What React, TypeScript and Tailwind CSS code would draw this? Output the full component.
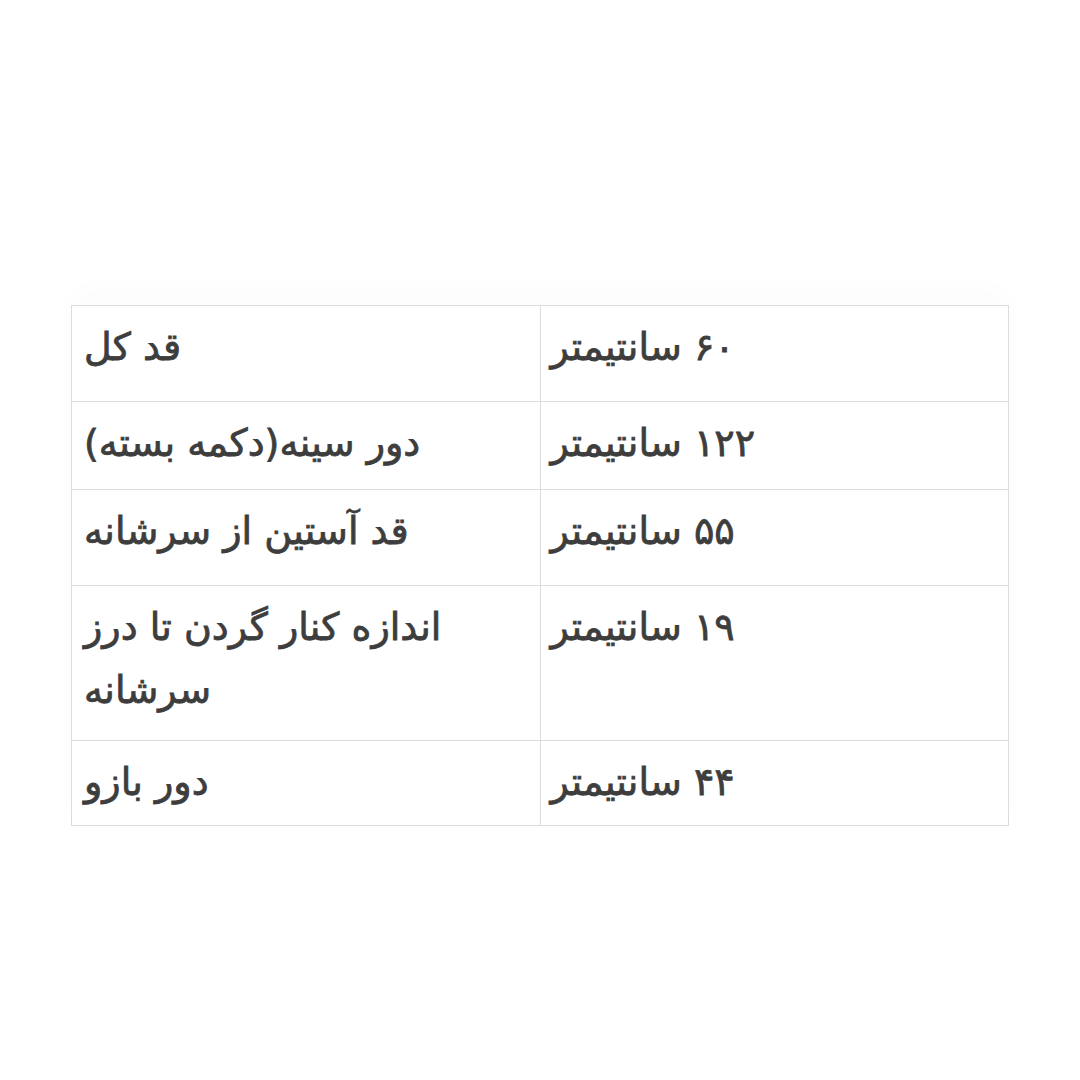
import React from "react";

const rows: { label: string; value: string; h: string }[] = [
  { label: "قد کل", value: "۶۰ سانتیمتر", h: "h-[96px]" },
  { label: "دور سینه(دکمه بسته)", value: "۱۲۲ سانتیمتر", h: "h-[88px]" },
  { label: "قد آستین از سرشانه", value: "۵۵ سانتیمتر", h: "h-[96px]" },
  { label: "اندازه کنار گردن تا درز سرشانه", value: "۱۹ سانتیمتر", h: "h-[155px]" },
  { label: "دور بازو", value: "۴۴ سانتیمتر", h: "h-[85px]" },
];

export default function App() {
  return (
    <div className="w-[1080px] h-[1080px] bg-white flex flex-col items-center pt-[305px]">
      <div className="w-[938px] shadow-[0_-14px_24px_rgba(0,0,0,0.015)]">
        <table className="w-full border-collapse table-fixed" dir="ltr">
          <tbody>
            {rows.map((r, i) => (
              <tr key={i} className={r.h}>
                <td
                  dir="rtl"
                  className="w-1/2 border border-[#dcdcdc] text-left align-top pl-[12px] pr-[60px] pt-[10px] text-[38px] leading-[63px] text-[#3d3d3d] [-webkit-text-stroke:0.8px_#3d3d3d] font-['DejaVu_Sans',sans-serif]"
                >
                  {r.label}
                </td>
                <td
                  dir="rtl"
                  className="w-1/2 border border-[#dcdcdc] text-left align-top pl-[10px] pt-[10px] text-[38px] leading-[63px] text-[#3d3d3d] [-webkit-text-stroke:0.8px_#3d3d3d] font-['DejaVu_Sans',sans-serif]"
                >
                  {r.value}
                </td>
              </tr>
            ))}
          </tbody>
        </table>
      </div>
    </div>
  );
}
